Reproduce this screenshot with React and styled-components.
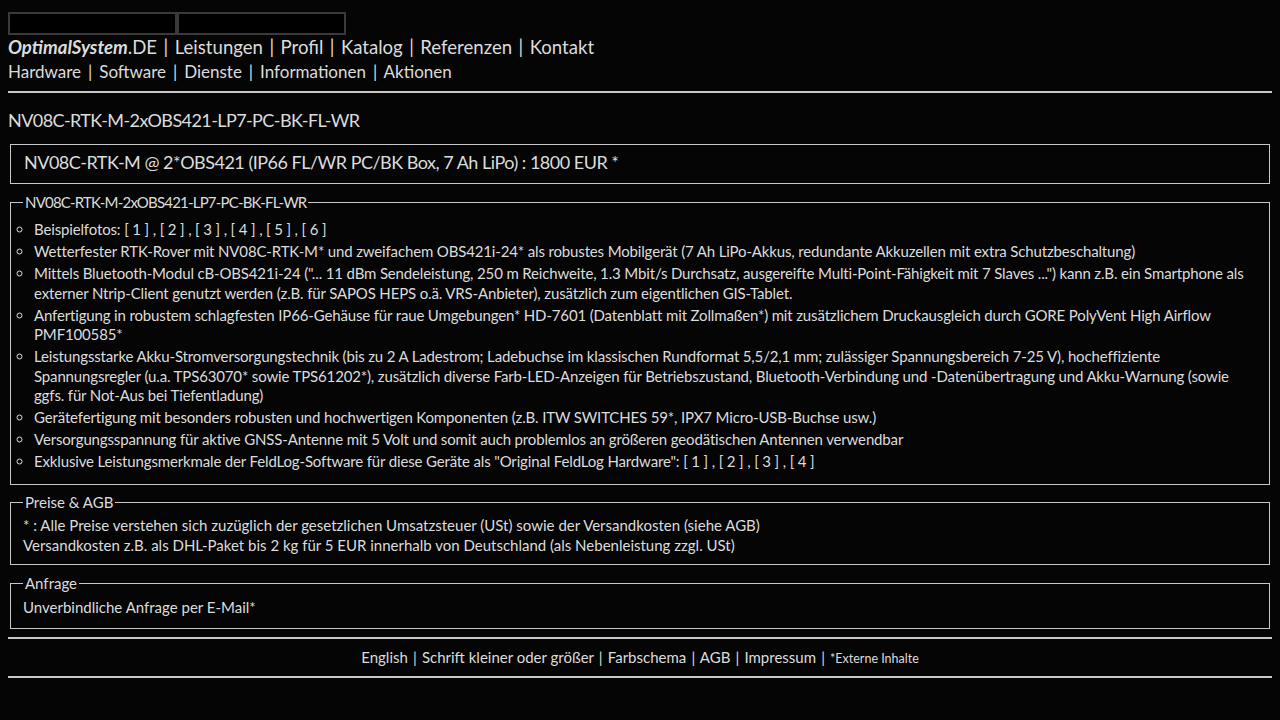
import React from "react";
import styled, { createGlobalStyle } from "styled-components";

const Global = createGlobalStyle`
  html, body { background: #050505; }
  body {
    margin: 0;
    color: #dcdcdc;
    font-family: Lato, "Noto Sans", sans-serif;
    font-size: 15px;
  }
  a { color: inherit; text-decoration: none; }
`;

const Page = styled.div`
  padding: 8px;
`;

const FrameRow = styled.div`
  display: flex;
  margin-top: 4px;
`;
const Frame = styled.div`
  width: 165px;
  height: 19px;
  border: 2px solid #3a3a3a;
  background: #000;
`;

const Nav = styled.div`
  font-size: ${(p) => p.$size}px;
  line-height: ${(p) => p.$lh}px;
  white-space: nowrap;
`;
const Sep = styled.span`
  margin: 0 ${(p) => p.$gap}px;
`;
const Brand = styled.span`
  font-weight: bold;
  font-style: italic;
`;
const Rule = styled.div`
  height: 2px;
  background: #c8c8c8;
  margin: ${(p) => p.$m};
`;
const Title = styled.h1`
  font-size: 18px;
  font-weight: normal;
  margin: 15px 0 0;
  line-height: 24px;
  letter-spacing: -0.58px;
`;
const PriceBox = styled.div`
  margin: 12px 2px 0;
  border: 1px solid #c8c8c8;
  padding: 6px 13px 9px;
  font-size: 18px;
  line-height: 23px;
  letter-spacing: -0.5px;
`;
const Fieldset = styled.fieldset`
  margin: ${(p) => p.$mt}px 2px 0;
  border: 1px solid #c8c8c8;
  padding: 0 12px ${(p) => p.$pb}px 12px;
  min-width: 0;
`;
const Legend = styled.legend`
  padding: 0 2px;
  margin-left: 0;
  font-size: 15px;
  line-height: 19px;
  letter-spacing: ${(p) => p.$ls || 0}px;
`;
const List = styled.ul`
  list-style: circle;
  margin: 8px 0 0;
  padding-left: 11px;
`;
const Item = styled.li`
  line-height: 19.5px;
  margin-bottom: 2.5px;
  letter-spacing: -0.15px;
`;
const Para = styled.div`
  line-height: 19.5px;
  margin-top: ${(p) => p.$mt || 0}px;
`;
const Footer = styled.div`
  text-align: center;
  font-size: 15px;
  line-height: 20px;
  padding: 8px 0 7px;
`;
const Small = styled.span`
  font-size: 12.5px;
`;

const refs = (n) =>
  Array.from({ length: n }, (_, i) => (
    <React.Fragment key={i}>
      {i > 0 ? " , " : ""}
      <a href="#">[ {i + 1} ]</a>
    </React.Fragment>
  ));

export default function App() {
  return (
    <Page>
      <Global />
      <FrameRow>
        <Frame />
        <Frame />
      </FrameRow>
      <Nav $size={18.6} $lh={25}>
        <a href="#">
          <Brand>OptimalSystem</Brand>.DE
        </a>{" "}
        <Sep $gap={1.7}>|</Sep> <a href="#">Leistungen</a> <Sep $gap={1.7}>|</Sep>{" "}
        <a href="#">Profil</a> <Sep $gap={1.7}>|</Sep> <a href="#">Katalog</a>{" "}
        <Sep $gap={1.7}>|</Sep> <a href="#">Referenzen</a> <Sep $gap={1.7}>|</Sep>{" "}
        <a href="#">Kontakt</a>
      </Nav>
      <Nav $size={17} $lh={23}>
        <a href="#">Hardware</a> <Sep $gap={2.6}>|</Sep> <a href="#">Software</a>{" "}
        <Sep $gap={2.6}>|</Sep> <a href="#">Dienste</a> <Sep $gap={2.6}>|</Sep>{" "}
        <a href="#">Informationen</a> <Sep $gap={2.6}>|</Sep> <a href="#">Aktionen</a>
      </Nav>
      <Rule $m="8px 0 0" />
      <Title>NV08C-RTK-M-2xOBS421-LP7-PC-BK-FL-WR</Title>
      <PriceBox>NV08C-RTK-M @ 2*OBS421 (IP66 FL/WR PC/BK Box, 7 Ah LiPo) : 1800 EUR *</PriceBox>
      <Fieldset $mt={9} $pb={10}>
        <Legend $ls={-0.8}>NV08C-RTK-M-2xOBS421-LP7-PC-BK-FL-WR</Legend>
        <List>
          <Item>Beispielfotos: {refs(6)}</Item>
          <Item>
            Wetterfester RTK-Rover mit NV08C-RTK-M* und zweifachem OBS421i-24* als robustes Mobilgerät (7 Ah LiPo-Akkus, redundante Akkuzellen mit extra Schutzbeschaltung)
          </Item>
          <Item>
            Mittels Bluetooth-Modul cB-OBS421i-24 ("... 11 dBm Sendeleistung, 250 m Reichweite, 1.3 Mbit/s Durchsatz, ausgereifte Multi-Point-Fähigkeit mit 7 Slaves ...") kann z.B. ein Smartphone als externer Ntrip-Client genutzt werden (z.B. für SAPOS HEPS o.ä. VRS-Anbieter), zusätzlich zum eigentlichen GIS-Tablet.
          </Item>
          <Item>
            Anfertigung in robustem schlagfesten IP66-Gehäuse für raue Umgebungen* HD-7601 (Datenblatt mit Zollmaßen*) mit zusätzlichem Druckausgleich durch GORE PolyVent High Airflow PMF100585*
          </Item>
          <Item>
            Leistungsstarke Akku-Stromversorgungstechnik (bis zu 2 A Ladestrom; Ladebuchse im klassischen Rundformat 5,5/2,1 mm; zulässiger Spannungsbereich 7-25 V), hocheffiziente Spannungsregler (u.a. TPS63070* sowie TPS61202*), zusätzlich diverse Farb-LED-Anzeigen für Betriebszustand, Bluetooth-Verbindung und -Datenübertragung und Akku-Warnung (sowie ggfs. für Not-Aus bei Tiefentladung)
          </Item>
          <Item>
            Gerätefertigung mit besonders robusten und hochwertigen Komponenten (z.B. ITW SWITCHES 59*, IPX7 Micro-USB-Buchse usw.)
          </Item>
          <Item>
            Versorgungsspannung für aktive GNSS-Antenne mit 5 Volt und somit auch problemlos an größeren geodätischen Antennen verwendbar
          </Item>
          <Item>
            Exklusive Leistungsmerkmale der FeldLog-Software für diese Geräte als "Original FeldLog Hardware": {refs(4)}
          </Item>
        </List>
      </Fieldset>
      <Fieldset $mt={8} $pb={9}>
        <Legend>Preise &amp; AGB</Legend>
        <Para $mt={4}>
          <a href="#">*</a> : Alle Preise verstehen sich zuzüglich der gesetzlichen Umsatzsteuer (USt) sowie der Versandkosten (siehe AGB)
        </Para>
        <Para>
          Versandkosten z.B. als DHL-Paket bis 2 kg für 5 EUR innerhalb von Deutschland (als Nebenleistung zzgl. USt)
        </Para>
      </Fieldset>
      <Fieldset $mt={9} $pb={10}>
        <Legend>Anfrage</Legend>
        <Para $mt={5}>
          <a href="#">Unverbindliche Anfrage per E-Mail*</a>
        </Para>
      </Fieldset>
      <Rule $m="8px 0 0" />
      <Footer>
        <a href="#">English</a> <Sep $gap={1.3}>|</Sep> <a href="#">Schrift kleiner oder größer</a>{" "}
        <Sep $gap={1.3}>|</Sep> <a href="#">Farbschema</a> <Sep $gap={1.3}>|</Sep>{" "}
        <a href="#">AGB</a> <Sep $gap={1.3}>|</Sep> <a href="#">Impressum</a>{" "}
        <Sep $gap={1.3}>|</Sep> <Small>*Externe Inhalte</Small>
      </Footer>
      <Rule $m="0" />
    </Page>
  );
}
